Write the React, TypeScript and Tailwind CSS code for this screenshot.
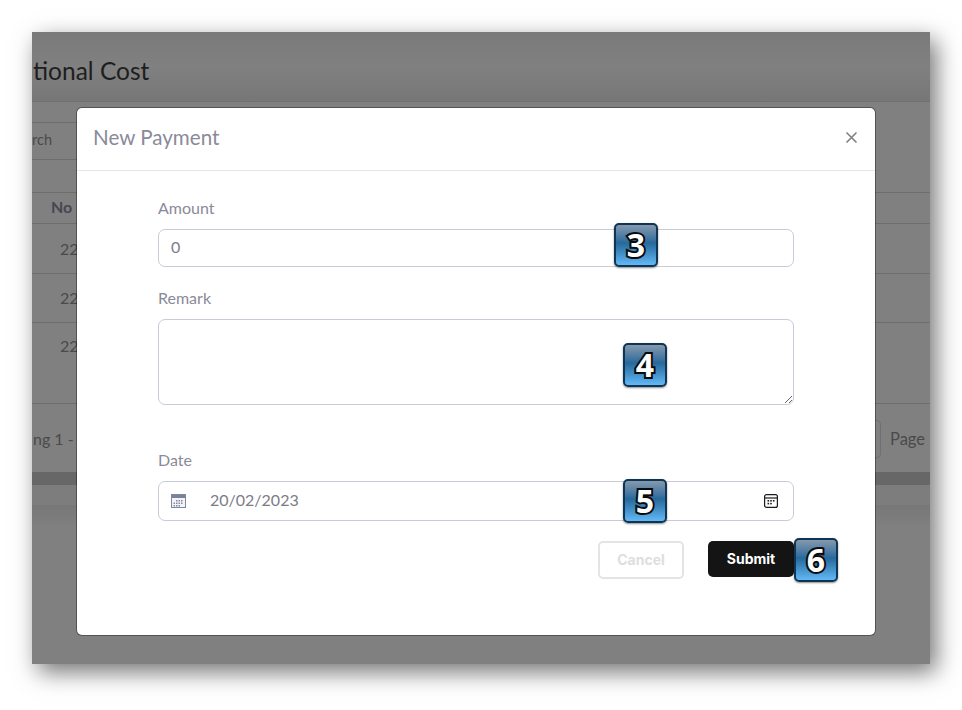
function Badge({ n, className }: { n: string; className: string }) {
  return (
    <div
      className={`absolute flex h-[44px] w-[44px] items-center justify-center rounded-[5px] border-2 border-[#0f3553] bg-gradient-to-b from-[#8499ad] via-[#26699c] via-45% to-[#62b9f6] shadow-[0_1px_2px_rgba(0,0,0,0.45)] ${className}`}
    >
      <span className="font-['Open_Sans',sans-serif] text-[32px] font-bold leading-none text-white [-webkit-text-stroke:4px_#0b0b0b] [paint-order:stroke_fill]">
        {n}
      </span>
    </div>
  );
}

function CalendarColor() {
  return (
    <svg width="15" height="14" viewBox="0 0 15 14" className="shrink-0">
      <rect x="0.5" y="0.5" width="14" height="13" fill="#f3f4f8" stroke="#7d88a0" />
      <rect x="1" y="1" width="13" height="3" fill="#79829a" />
      <g fill="#7f8aa6">
        <rect x="5" y="6" width="1.5" height="1.5" />
        <rect x="7.5" y="6" width="1.5" height="1.5" />
        <rect x="10" y="6" width="1.5" height="1.5" fill="#c46a5e" />
        <rect x="2.5" y="8.5" width="1.5" height="1.5" />
        <rect x="5" y="8.5" width="1.5" height="1.5" />
        <rect x="7.5" y="8.5" width="1.5" height="1.5" />
        <rect x="10" y="8.5" width="1.5" height="1.5" />
        <rect x="2.5" y="11" width="1.5" height="1.5" />
        <rect x="5" y="11" width="1.5" height="1.5" />
        <rect x="7.5" y="11" width="1.5" height="1.5" />
      </g>
    </svg>
  );
}

function CalendarOutline() {
  return (
    <svg width="14" height="14" viewBox="0 0 14 14" className="shrink-0" fill="none">
      <rect x="0.6" y="0.6" width="12.8" height="12.8" rx="2" stroke="#1c1c1c" strokeWidth="1.2" />
      <path d="M1 4h12" stroke="#1c1c1c" strokeWidth="1.2" />
      <g fill="#1c1c1c">
        <rect x="3.5" y="6" width="1.6" height="1.6" />
        <rect x="6.2" y="6" width="1.6" height="1.6" />
        <rect x="8.9" y="6" width="1.6" height="1.6" />
        <rect x="3.5" y="8.8" width="1.6" height="1.6" />
        <rect x="6.2" y="8.8" width="1.6" height="1.6" />
      </g>
    </svg>
  );
}

export default function App() {
  return (
    <div className="h-[710px] w-[962px] overflow-hidden bg-white p-8 font-['Lato','Open_Sans',sans-serif]">
      {/* Window */}
      <div className="relative h-[632px] w-[898px] bg-[#808080] shadow-[6px_8px_22px_rgba(0,0,0,0.55)]">
        <div className="h-full w-full overflow-hidden text-[#3f3f46]">
          {/* Page behind overlay */}
          <div className="flex h-[70px] items-center border-b border-[#707070] bg-gradient-to-b from-[#7a7a7a] via-[#808080] to-[#777777] pt-[10px]">
            <h1 className="ml-[1px] whitespace-nowrap text-[24.5px] text-[#1e1e1e]">tional Cost</h1>
          </div>
          <div className="mt-[20px] flex h-[38px] w-[60px] items-center border-y border-[#6e6e6e] pb-[2px] text-[14.5px] text-[#4a4a4a]">
            <span>rch</span>
          </div>
          <div className="mt-[32px] flex h-[32px] items-center border-y border-[#6e6e6e] pb-[2px] pl-[19px] text-[16px] font-bold text-[#474750]">
            No
          </div>
          <div className="flex h-[50px] items-center border-b border-[#6e6e6e] pl-[28px] text-[16px] text-[#4a4a4a]">22</div>
          <div className="flex h-[49px] items-center border-b border-[#6e6e6e] pl-[28px] text-[16px] text-[#4a4a4a]">22</div>
          <div className="flex h-[48px] items-center pb-[2px] pl-[28px] text-[16px] text-[#4a4a4a]">22</div>
          <div className="mt-[32px] flex h-[69px] items-center justify-between border-t border-[#6e6e6e] pt-[2px] text-[16px] text-[#4a4a4a]">
            <span className="ml-[1px] whitespace-nowrap">ng 1 -</span>
            <div className="flex items-center gap-[9px] pr-[5px]">
              <div className="h-[38px] w-[20px] rounded-r-[4px] border border-[#707070]" />
              <span className="text-[16.5px]">Page</span>
            </div>
          </div>
          <div className="h-[13px] bg-[#676767]" />
          <div className="h-[21px] border-b border-[#777777] bg-[#7d7d7d]" />
          <div className="h-[20px] bg-gradient-to-b from-[#777777] to-[#808080]" />
        </div>

        {/* Modal */}
        <div className="absolute left-[45px] top-[76px] h-[527px] w-[798px] rounded-[5px] bg-white shadow-[0_0_0_1px_rgba(0,0,0,0.35)]">
          <div className="flex h-[63px] items-center justify-between border-b border-[#e6e6ee] pb-[3px] pl-[16px] pr-[17px]">
            <h2 className="text-[20.6px] text-[#8a8a99]">New Payment</h2>
            <svg width="13" height="13" viewBox="0 0 13 13" fill="none">
              <path d="M1.5 1.5l10 10M11.5 1.5l-10 10" stroke="#808080" strokeWidth="1.6" />
            </svg>
          </div>

          <div className="px-[81px] pt-[26px] text-[16px] text-[#8a8a99]">
            <label className="block h-[21px] leading-[21px]">Amount</label>
            <input
              defaultValue="0"
              className="mt-[11px] block h-[38px] w-full rounded-[7px] border border-[#c8ccd8] px-[12px] pb-[3px] text-[16px] text-[#7c7c86] outline-none"
            />

            <label className="mt-[20px] block h-[21px] leading-[21px]">Remark</label>
            <textarea className="mt-[11px] block h-[86px] w-full rounded-[7px] border border-[#c8ccd8] outline-none" />

            <label className="mt-[44px] block h-[21px] leading-[21px]">Date</label>
            <div className="mt-[11px] flex h-[40px] items-center rounded-[7px] border border-[#c8ccd8] pl-[12px] pr-[15px]">
              <CalendarColor />
              <span className="ml-[24px] flex-1 pb-[2px] text-[16px] text-[#7c7c86]">20/02/2023</span>
              <CalendarOutline />
            </div>

            <div className="mt-[20px] flex items-start justify-end gap-[24px] font-['Inter',sans-serif]">
              <button className="h-[38px] w-[86px] rounded-[5px] border-2 border-[#e4e4e4] pb-[2px] text-[14px] font-bold text-[#dedede]">
                Cancel
              </button>
              <button className="h-[36px] w-[86px] rounded-[5px] bg-[#141414] pb-[1px] text-[14px] font-bold text-white">
                Submit
              </button>
            </div>
          </div>
        </div>

        {/* Step badges */}
        <Badge n="3" className="left-[582px] top-[191px]" />
        <Badge n="4" className="left-[591px] top-[311px]" />
        <Badge n="5" className="left-[591px] top-[447px]" />
        <Badge n="6" className="left-[762px] top-[506px]" />
      </div>
    </div>
  );
}
